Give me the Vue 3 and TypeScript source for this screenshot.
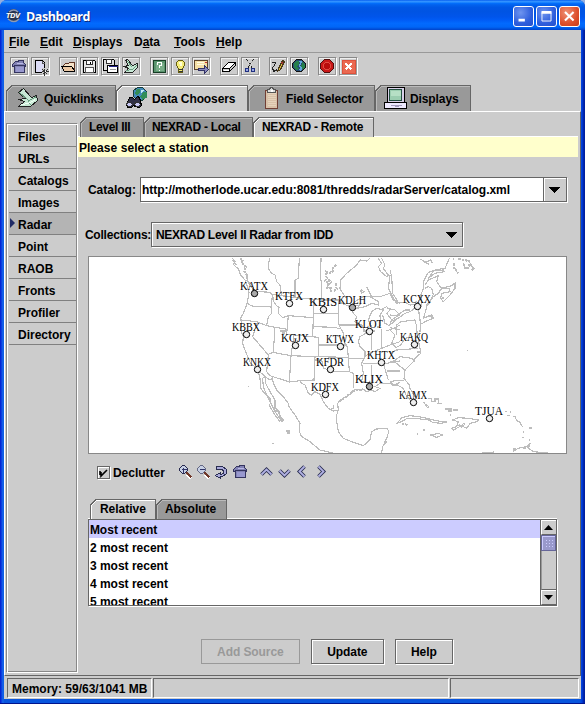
<script setup lang="ts">
interface Shape { d: string; f?: string; s?: string; w?: number }
interface Tab { label: string; width: number; pad: number; active?: boolean; icon?: string; cls?: string }
interface Station { id: string; x: number; y: number; tx: number; ty: number; on?: boolean }

const K = '#000'
const icons: Record<string, Shape[]> = {
  home: [
    { d: 'M2 7L5 4H8V3H13V5L15 7V9H14V15H4V9H2Z', f: '#8383b5', s: '#34345f' },
    { d: 'M5 9H13V14H5Z', f: '#9999cf' }, { d: 'M3 8H15', s: '#34345f' }, { d: 'M6 6H12', s: '#b9b9e6' }
  ],
  page: [
    { d: 'M4 3H11L13 5V15H4Z', f: '#dcdcf6', s: K }, { d: 'M11 3V6H13', s: '#555' }, { d: 'M10 10H17V17H10Z', f: '#ccc' },
    { d: 'M10 14H17M13 11V18M11 12L16 17M16 12L11 17', s: '#333' }, { d: 'M13 14h1', s: '#fff', w: 1 }
  ],
  open: [
    { d: 'M4 8L6 6H9L10 5H15V13H5Z', f: '#f6e3c9', s: '#5d3322' }, { d: 'M2 9H12L15 13V14H5Z', f: '#ecc9a5', s: K }
  ],
  save: [
    { d: 'M3 3H14L15 4V15H3Z', f: '#e8e8e8', s: K }, { d: 'M6 3H12V7H6Z', f: '#fff', s: '#333' }, { d: 'M5 10H13V15H5Z', f: '#fff', s: '#555' }, { d: 'M10 4V6', s: K }
  ],
  saveas: [
    { d: 'M2 2H12L13 3V13H2Z', f: '#ddd', s: K }, { d: 'M5 2H10V6H5Z', f: '#fff', s: '#333' },
    { d: 'M6 8H16V15H6Z', f: '#fff', s: K }, { d: 'M7 9H16', s: '#228' }, { d: 'M8 12H14', s: '#999' }
  ],
  link: [
    { d: 'M3 3L5 2L10 8L15 6V10L10 15H2L6 11L2 9L6 8Z', f: '#c7e9d5', s: '#222' }, { d: 'M4 13L10 12L14 8M5 4L10 10', s: '#6b9d80' }
  ],
  help: [
    { d: 'M3 3H15V15H3Z', f: '#5a946e', s: '#173d25' }, { d: 'M5 5H13V13H5Z', f: '#78ad88' },
    { d: 'M7 7V5H11V8H9V10M9 12V13', s: '#fff' }
  ],
  bulb: [
    { d: 'M7 3H11L13 5V8L11 11V15H7V11L5 8V5Z', f: '#f5ed79', s: '#665e12' }, { d: 'M7 5L8 4H10L11 7L9 9Z', f: '#ffffd8' }, { d: 'M7 12H11M7 14H11', s: '#333' }
  ],
  send: [
    { d: 'M2 3H15V12H2Z', f: '#f4dfa5', s: '#5b432b' }, { d: 'M4 5H11M4 7H11', s: '#fffbe3' }, { d: 'M6 11H12V8L16 12L12 16V13H6Z', f: '#8888bb', s: '#333366' }, { d: 'M12 5H14', s: '#c33' }
  ],
  eraser: [{ d: 'M2 11L8 5H15L9 11Z', f: '#fff', s: K }, { d: 'M2 11V14H9L15 8V5L9 11V14', s: K }, { d: 'M3 12H8V13H3Z', f: '#fff' }],
  cut: [
    { d: 'M5 2L11 11M12 2L6 11', s: '#222' }, { d: 'M6 3L10 9M11 3L8 8', s: '#eee', w: .7 }, { d: 'M4 11H7V14H4ZM10 11H13V14H10Z', f: '#9ca8e2', s: '#203081' }
  ],
  pencil: [
    { d: 'M2 5H6L5 8L3 10L4 14L8 12', s: '#222' }, { d: 'M8 14L9 11L13 3L15 4L11 12Z', f: '#d9b83d', s: '#49391a' }, { d: 'M12 5L14 6', s: '#a33' }
  ],
  globe: [
    { d: 'M6 2H11L15 6V10L11 14H6L2 10V6Z', f: '#244c74', s: '#111' },
    { d: 'M6 3H9L8 7L6 9L8 11L6 13L3 10V6ZM11 4L14 7V10L12 12L10 10L11 7Z', f: '#26804c' }, { d: 'M8 4H11L9 8L11 11L9 13', s: '#62a6dc', w: 1.5 }
  ],
  stop: [{ d: 'M6 2H11L15 6V11L11 15H6L2 11V6Z', f: '#c91818', s: '#510d0d' }, { d: 'M7 5H10L12 7V10L10 12H7L5 10V7Z', f: '#b90c0c', s: '#e04a40' }],
  close: [{ d: 'M2 2H16V16H2Z', f: '#df513b' }, { d: 'M3 3H15V15H3Z', f: '#ea6951' }, { d: 'M6 6L12 12M12 6L6 12', s: '#fff', w: 2.5 }],
  zoomin: [{ d: 'M9 10L13 14', s: '#fff', w: 4 }, { d: 'M8 8L13 13', s: '#70382a', w: 2 }, { d: 'M4 1H6L9 4V6L6 9H4L1 6V4Z', f: '#c7d0e4', s: '#272a50' }, { d: 'M3 5H8M5 3V8', s: '#313569' }],
  zoomout: [{ d: 'M9 10L13 14', s: '#fff', w: 4 }, { d: 'M8 8L13 13', s: '#70382a', w: 2 }, { d: 'M4 1H6L9 4V6L6 9H4L1 6V4Z', f: '#c7d0e4', s: '#656985' }, { d: 'M3 5H8', s: '#313569' }],
  undo: [{ d: 'M2 2H8L12 5V9L8 12H6V14L1 11L6 8V10L9 9V6L7 5L2 5Z', f: '#aaaada', s: '#292d51' }],
  up: [{ d: 'M1 9L6 4L11 9', s: '#292d51', w: 3.6 }, { d: 'M1 9L6 4L11 9', s: '#b1b1e3', w: 1.8 }],
  down: [{ d: 'M1 5L6 10L11 5', s: '#292d51', w: 3.6 }, { d: 'M1 5L6 10L11 5', s: '#b1b1e3', w: 1.8 }],
  left: [{ d: 'M8 1L3 6L8 11', s: '#292d51', w: 3.6 }, { d: 'M8 1L3 6L8 11', s: '#b1b1e3', w: 1.8 }],
  right: [{ d: 'M4 1L9 6L4 11', s: '#292d51', w: 3.6 }, { d: 'M4 1L9 6L4 11', s: '#b1b1e3', w: 1.8 }],
  ribbon: [
    { d: 'M1 6L6 2L14 11L19 9L20 14L13 20H1L7 15L1 13L8 12Z', f: '#c7e9d5', s: '#222' }, { d: 'M2 6L11 14M12 14L19 10M11 14L13 19', s: '#699d7f' }, { d: 'M4 18L11 17L18 13', s: '#f0fff5' }
  ],
  binoculars: [
    { d: 'M12 1H17L21 5V10L17 14H12L8 10V4Z', f: '#438bbb', s: '#173d3c' }, { d: 'M11 3L15 2L14 6L11 9L9 7ZM18 5L21 6V11L17 13L15 10Z', f: '#328d58' }, { d: 'M15 3L18 4L16 6Z', f: '#c5ecf5' },
    { d: 'M4 11H7L9 13L12 10L14 11L16 19L14 21L10 20L8 19L6 21H2L1 18Z', f: '#303047', s: K }, { d: 'M2 16H5L7 18L5 20H3L1 18ZM10 16H13L15 18L13 20H11L9 18Z', f: '#c6c6f5', s: '#333' }
  ],
  clipboard: [
    { d: 'M2 4H14V22H2Z', f: '#d9c1a8', s: '#713f35' }, { d: 'M4 7H12M4 9H12M4 11H12M4 13H12M4 15H12M4 17H12M4 19H12', s: '#e6d3bc' }, { d: 'M4 3H6L7 1H9L10 3H12V6H4Z', f: '#ddd', s: '#555' }, { d: 'M7 3H9V5H7Z', f: '#fff' }
  ],
  computer: [
    { d: 'M4 1H21V16H4Z', f: '#d8d0e8', s: K }, { d: 'M6 3H18V14H6Z', f: '#9bcdb0', s: '#245041' }, { d: 'M7 4H17V9H7Z', f: '#b6dfc5' },
    { d: 'M1 16H23V22H1Z', f: '#eeeaff', s: K }, { d: 'M7 19H18M11 20H15', s: '#a49cbd' }
  ]
}

const menus = [
  { a: '', u: 'F', b: 'ile', w: 31 }, { a: '', u: 'E', b: 'dit', w: 33 }, { a: '', u: 'D', b: 'isplays', w: 61 },
  { a: 'D', u: 'a', b: 'ta', w: 40 }, { a: '', u: 'T', b: 'ools', w: 42 }, { a: '', u: 'H', b: 'elp', w: 30 }
]
const tools = [['home', 'page'], ['open', 'save', 'saveas', 'link'], ['help', 'bulb', 'send'], ['eraser', 'cut'], ['pencil', 'globe'], ['stop', 'close']]
const mainTabs: Tab[] = [
  { label: 'Quicklinks', width: 110, pad: 11, icon: 'ribbon' },
  { label: 'Data Choosers', width: 132, pad: 9, active: true, icon: 'binoculars', cls: 'w25' },
  { label: 'Field Selector', width: 127, pad: 15, icon: 'clipboard', cls: 'w16' },
  { label: 'Displays', width: 96, pad: 8, icon: 'computer', cls: 'w25' }
]
const radarTabs: Tab[] = [
  { label: 'Level III', width: 64, pad: 9 }, { label: 'NEXRAD - Local', width: 109, pad: 8 }, { label: 'NEXRAD - Remote', width: 121, pad: 9, active: true }
]
const timeTabs: Tab[] = [{ label: 'Relative', width: 66, pad: 10, active: true }, { label: 'Absolute', width: 71, pad: 9 }]
const nav = ['Files', 'URLs', 'Catalogs', 'Images', 'Radar', 'Point', 'RAOB', 'Fronts', 'Profiler', 'Directory']
const times = ['Most recent', '2 most recent', '3 most recent', '4 most recent', '5 most recent']

const stations: Station[] = [
  { id: 'KATX', x: 254, y: 293, tx: 240, ty: 290, on: true }, { id: 'KTFX', x: 289, y: 303, tx: 275, ty: 300 },
  { id: 'KBIS', x: 323, y: 309, tx: 309, ty: 306 }, { id: 'KDLH', x: 352, y: 307, tx: 338, ty: 304, on: true },
  { id: 'KCXX', x: 417, y: 306, tx: 403, ty: 303 }, { id: 'KBBX', x: 246, y: 334, tx: 232, ty: 331 },
  { id: 'KGJX', x: 295, y: 345, tx: 281, ty: 342 }, { id: 'KTWX', x: 340, y: 346, tx: 326, ty: 343 },
  { id: 'KLOT', x: 369, y: 331, tx: 355, ty: 328 }, { id: 'KAKQ', x: 414, y: 344, tx: 400, ty: 341 },
  { id: 'KNKX', x: 257, y: 369, tx: 243, ty: 366 }, { id: 'KFDR', x: 330, y: 369, tx: 316, ty: 366 },
  { id: 'KHTX', x: 381, y: 362, tx: 367, ty: 359 }, { id: 'KLIX', x: 369, y: 386, tx: 355, ty: 383, on: true },
  { id: 'KDFX', x: 325, y: 394, tx: 311, ty: 391 }, { id: 'KAMX', x: 413, y: 402, tx: 399, ty: 399 },
  { id: 'TJUA', x: 489, y: 418, tx: 475, ty: 415 }
]

const west = [
  'M38 10L45 20 40 28 55 42 62 60 75 75 82 95 87 112 84 130 80 150 70 175 62 190 65 205 62 225 70 245 68 265 75 285 85 310 92 325 110 340 115 350 130 358 135 365 128 370 130 395 138 415 148 435 165 470 185 500 190 495 180 485 178 470 165 455 165 435 150 410 137 385 135 365 150 375 157 370 160 385 170 405 190 425 205 445 207 455 225 480 240 505 238 530 245 545 270 560 300 585 340 594',
  'M115 350L120 370 122 400 130 410 150 430 152 445 147 450 165 480 180 500',
  'M95 108L150 112 155 118 185 122 225 128 305 135 355 135 365 145 378 150 392 155',
  'M148 10L145 40 155 55 165 60 170 80 180 90 185 122', 'M238 10L235 70 225 75 225 128', 'M303 10L302 70 305 90 305 135',
  'M84 145L92 152 110 155 152 155', 'M158 118L153 155 155 175 145 185 140 212', 'M62 195L110 200 140 212 165 217 198 222',
  'M158 118L160 138 168 150 177 158 175 175 188 188 205 182 280 188', 'M283 130L280 188 278 245', 'M205 182L200 238 295 247 295 305', 'M165 217L160 292 145 298 140 350',
  'M110 205L98 245 145 300', 'M158 292L213 302 285 305 385 307', 'M222 240L213 302 208 381 150 362 140 350', 'M285 305L282 375 240 377',
  'M208 381L240 377 245 385 255 390 265 415 275 420 285 410 300 418 310 440 325 460 340 468 355 465', 'M280 175L355 175', 'M280 215L345 217 360 222',
  'M355 135V175L357 210 370 235 375 265 382 275 385 307 388 350 400 355 400 380 402 400', 'M357 210H412L430 218', 'M295 270H378', 'M285 315H305L310 340 330 345 345 350 388 350',
  'M355 465L353 445 360 435 380 425 395 415 402 405 430 403 440 410 455 405 465 410 480 400 465 395 480 385 510 385 520 392 540 382',
  'M390 152L400 175 410 185 405 200 425 210 438 235 420 245 415 260 420 275 435 290 435 305 425 325 430 355 425 380 460 385', 'M385 310H430',
  'M430 228H465M455 228V285M485 222V280L460 290 435 303M510 218L540 225M485 280L510 270 540 260', 'M430 325H500L540 318M455 330L455 385M490 325L505 375M500 348H540',
  'M390 155L405 140 430 125 450 125 475 140 475 150 455 145 435 155 410 160 420 150Z', 'M455 215L445 195 455 170 470 160 490 165 480 180 482 210 470 218',
  'M480 165L500 155 510 165 500 175 515 195 508 212 495 205 488 180', 'M500 228L520 220 540 210M515 195L530 185 540 180M500 160L525 165 540 180',
  'M450 10L440 18 420 15 410 30 380 55 362 75 360 100 368 115 380 130', 'M440 95L455 125 480 125 510 115 520 135 540 145M425 105L432 110 425 115 422 108Z',
  'M475 10L485 25 475 35 482 50 500 65 505 60 490 40 495 30 485 10M510 60L505 100 520 130 530 145 540 142',
  'M355 465L350 480 350 500 355 530 370 550 395 560 430 572 450 555 455 530 470 522 500 520 507 528 500 550 488 575 485 594',
  'M83 395h4M157 565h4', 'M340 450v10h-6M490 570L500 560'
]
const rough = ['M60 10L68 15 65 25 78 35 72 48 82 62 80 75 92 90 108 112', 'M40 15L48 30', 'M348 30L338 40 340 48 328 55 318 50 320 70 315 78 325 82 322 98 332 100 334 112M325 72L333 80 330 90M348 85L350 102 342 108', 'M180 228h14v6h-10M200 528h6v6h-6zM160 457L178 475 185 500M358 440L385 420 400 408 430 403']
const east = [
  'M0 45L5 65 8 115 25 142 45 142 60 150 80 148', 'M92 12L105 22 122 15 128 25M105 22L118 28', 'M178 10L165 40 135 45 115 52 100 80 100 100 85 140 80 155 60 170 45 175 25 190 0 200',
  'M115 70L130 48 160 45 162 50 135 55 115 70M105 90L115 75 145 62 140 80 150 95 155 100 185 92 195 85 195 100 180 120 160 140 152 130 155 115 180 110 178 100 155 100 145 115 130 125 120 140 110 150 108 165 100 190 125 180 130 190 105 200 92 208 90 230',
  'M105 100L115 95 125 100 130 118 118 145 108 155M0 180L20 182 45 165 60 165M95 120V155L85 160 92 208', 'M0 210L20 192 32 185M20 240V210L32 200 75 195 80 215 82 245 90 260',
  'M0 225L15 240 5 265 18 278 32 270 45 250 70 245', 'M90 235L85 255 90 280 92 295 75 310 70 320 45 345 42 370 58 390 60 400 78 430 72 450 60 435 48 420 40 400 22 390 10 390 0 380',
  'M0 295L20 285 85 280M0 320L12 318 30 305 65 310 75 320M45 345L25 330 12 318M0 380L20 376 42 376',
  'M22 505L35 488 60 482 85 485 110 490 130 495 155 500 172 500 155 505 130 503 115 495 75 490 52 490 35 500Z',
  'M185 520L200 515 205 500 188 495 205 488 235 490 265 495 262 500 240 505 230 520 215 512 190 525Z', 'M122 540L145 535 158 540 140 547ZM100 525h4M80 537h4',
  'M115 430h10v10h10v-8h10v14M140 445h15M165 462h18v6h-8M100 440L110 455M188 465h15v-3M180 480h4',
  'M275 592h30M305 592h5v-5M368 590L385 580 410 575 420 565 415 580 430 590 475 594M345 470h5M350 482h10M370 485h5l5 12 10 5 8 15M400 528v6M397 548h4M418 518h7v3h-7M418 555h3', 'M231 286h4'
]
const eastRough = ['M188 12h5M192 25L192 38 205 55M205 12L225 15 235 20M220 25L225 40 235 38 240 25 250 40 245 45M225 15L240 20', 'M188 85L197 92M155 130h6M115 180L128 188M82 290h8M100 440l15 18M35 505l18 5M205 510L215 515 225 505M400 580l15-5M370 582h8M360 470h4']
</script>

<template>
  <div class="window">
    <header class="title">
      <svg class="logo" width="16" height="16" viewBox="0 0 16 16"><circle cx="7.500" cy="7.500" r="6.500" fill="#26344e" /><path d="M3 4Q8 0 12 4M2 11Q8 16 13 11" stroke="#8e9ab4" stroke-width="1.500" fill="none" /><text x="0" y="10">TDV</text></svg>
      <span class="title-text">Dashboard</span>
      <div class="win-buttons">
        <svg class="wb" viewBox="0 0 21 21"><path d="M5 14.500H12" stroke-width="3" /></svg>
        <svg class="wb" viewBox="0 0 21 21"><path d="M5 6H16" stroke-width="3" /><path d="M5.500 6V15.500H15.500V6" /></svg>
        <svg class="wb red" viewBox="0 0 21 21"><path d="M5.500 5.500L15 15M15 5.500L5.500 15" stroke-width="2.300" /></svg>
      </div>
    </header>
    <div class="body">
      <nav class="menu"><span v-for="m in menus" :key="m.u + m.b" :style="{ width: m.w + 'px' }">{{ m.a }}<u>{{ m.u }}</u>{{ m.b }}</span></nav>
      <div class="toolbar">
        <div v-for="(g, i) in tools" :key="i" class="group">
          <button v-for="t in g" :key="t" class="tool"><svg width="18" height="18" viewBox="-.5 .5 18 18" shape-rendering="crispEdges"><path v-for="(p, j) in icons[t]" :key="j" :d="p.d" :fill="p.f || 'none'" :stroke="p.s" :stroke-width="p.w || 1" /></svg></button>
        </div>
      </div>
      <div class="tabs main-tabs">
        <div v-for="t in mainTabs" :key="t.label" class="tab" :style="{ width: t.width + 'px', paddingLeft: t.pad + 'px' }">
          <svg class="tab-bg" :width="t.width" height="26" shape-rendering="crispEdges"><path :d="`M.5 26V6L6 .5H${t.width - .5}V26`" :fill="t.active ? '#ccc' : '#999'" stroke="#666" /><path :d="`M1.500 26V6.500L6.500 1.500H${t.width - 1}`" fill="none" :stroke="t.active ? '#fff' : '#bbb'" /></svg>
          <svg class="tab-icon" :class="t.cls" height="24" :viewBox="`-.5 -.5 ${t.cls === 'w16' ? 16 : t.cls === 'w25' ? 25 : 22} 24`" shape-rendering="crispEdges"><path v-for="(p, j) in icons[t.icon!]" :key="j" :d="p.d" :fill="p.f || 'none'" :stroke="p.s" :stroke-width="p.w || 1" /></svg>
          <span>{{ t.label }}</span>
        </div>
      </div>
      <main class="content">
        <aside class="side"><div v-for="n in nav" :key="n" class="side-item" :class="{ sel: n === 'Radar' }"><i v-if="n === 'Radar'"></i>{{ n }}</div></aside>
        <section class="pane">
          <div class="tabs radar-tabs">
            <div v-for="t in radarTabs" :key="t.label" class="tab small" :style="{ width: t.width + 'px', paddingLeft: t.pad + 'px' }">
              <svg class="tab-bg" :width="t.width" height="20" shape-rendering="crispEdges"><path :d="`M.5 20V6L6 .5H${t.width - .5}V20`" :fill="t.active ? '#ccc' : '#999'" stroke="#666" /><path :d="`M1.500 20V6.500L6.500 1.500H${t.width - 1}`" fill="none" :stroke="t.active ? '#fff' : '#bbb'" /></svg>
              <span>{{ t.label }}</span>
            </div>
          </div>
          <div class="message">Please select a station</div>
          <div class="field catalog"><label>Catalog:</label><div class="combo editable"><span>http://motherlode.ucar.edu:8081/thredds/radarServer/catalog.xml</span><b><svg width="11" height="6"><path d="M0 0H11L5.500 6Z" /></svg></b></div></div>
          <div class="field collection"><label>Collections:</label><div class="combo choice"><span>NEXRAD Level II Radar from IDD</span><svg width="11" height="6"><path d="M0 0H11L5.500 6Z" /></svg></div></div>
          <svg class="map" width="477" height="196" viewBox="89 257 477 196">
            <g class="coast" transform="translate(220 255) scale(.33333)"><path v-for="d in west" :key="d" :d="d" /><path v-for="d in rough" :key="d" :d="d" class="rough" /></g>
            <g class="coast" transform="translate(390 255) scale(.33333)"><path v-for="d in east" :key="d" :d="d" /><path v-for="d in eastRough" :key="d" :d="d" class="rough" /></g>
            <g v-for="s in stations" :key="s.id"><circle :cx="s.x + .5" :cy="s.y + .5" r="3.200" :fill="s.on ? '#aaa' : '#eee'" stroke="#000" /><text :x="s.tx" :y="s.ty" textLength="28" lengthAdjust="spacingAndGlyphs">{{ s.id }}</text></g>
          </svg>
          <div class="map-tools">
            <span class="check"><svg width="11" height="11"><path d="M2 4V8M3 5V9L9 3" fill="none" stroke="#000" stroke-width="1.600" /></svg></span><span class="declutter">Declutter</span>
            <div class="mini"><svg v-for="i in ['zoomin', 'zoomout', 'undo', 'home']" :key="i" width="16" height="16" :viewBox="i === 'home' ? '.5 1.500 16 16' : '-.5 -.5 16 16'" shape-rendering="crispEdges"><path v-for="(p, j) in icons[i]" :key="j" :d="p.d" :fill="p.f || 'none'" :stroke="p.s" :stroke-width="p.w || 1" /></svg></div>
            <div class="mini arrows"><svg v-for="i in ['up', 'down', 'left', 'right']" :key="i" width="16" height="16" viewBox="-.5 -1.500 16 16"><path v-for="(p, j) in icons[i]" :key="j" :d="p.d" fill="none" :stroke="p.s" :stroke-width="p.w || 1" /></svg></div>
          </div>
          <div class="tabs time-tabs">
            <div v-for="t in timeTabs" :key="t.label" class="tab small" :style="{ width: t.width + 'px', paddingLeft: t.pad + 'px' }">
              <svg class="tab-bg" :width="t.width" height="20" shape-rendering="crispEdges"><path :d="`M.5 20V6L6 .5H${t.width - .5}V20`" :fill="t.active ? '#ccc' : '#999'" stroke="#666" /><path :d="`M1.500 20V6.500L6.500 1.500H${t.width - 1}`" fill="none" :stroke="t.active ? '#fff' : '#bbb'" /></svg>
              <span>{{ t.label }}</span>
            </div>
          </div>
          <div class="list">
            <div class="rows"><div v-for="(t, i) in times" :key="t" class="row" :class="{ picked: i === 0 }">{{ t }}</div></div>
            <div class="scroll"><div class="sb"><svg width="9" height="5"><path d="M0 5H9L4.500 0Z" /></svg></div><div class="thumb"></div><div class="track"></div><div class="sb"><svg width="9" height="5"><path d="M0 0H9L4.500 5Z" /></svg></div></div>
          </div>
          <div class="actions"><button class="disabled">Add Source</button><button class="update">Update</button><button class="helpb">Help</button></div>
        </section>
      </main>
      <footer class="status"><div class="c1">Memory: 59/63/1041 MB</div><div class="c2"></div><div class="c3"></div></footer>
    </div>
  </div>
</template>

<style>
body { background: #93aee0; overflow: hidden; }
</style>
<style scoped>
* { box-sizing: border-box; }
svg { display: block; flex: none; }
.window { width: 585px; height: 704px; padding: 0 4px 4px; background: linear-gradient(90deg, #0019cf, #0831d9 1px, #166aee 3px, #0855dd 4px, #0855dd 580px, #003ddc 582px, #001f9e 584px); border-bottom: 1px solid #00138c; border-radius: 7px 7px 0 0; font: bold 12px/14px "Liberation Sans", Arial, sans-serif; color: #000; white-space: nowrap; display: flex; flex-direction: column; }
.title { height: 30px; margin: 0 -4px; padding: 1px 6px 0; display: flex; align-items: center; flex: none; border-radius: 7px 7px 0 0; background: linear-gradient(#0058ee 0, #3593ff 4%, #288eff 7%, #036ffc 11%, #0262ee 16%, #0057e5 25%, #0054e3 38%, #0055eb 56%, #005bf5 66%, #026afe 78%, #0066f7 90%, #0042c9 100%); }
.logo text { font: italic bold 7px "Liberation Sans", sans-serif; fill: #fff; stroke: #fff; stroke-width: .2px; }
.title-text { color: #fff; font: bold 12.5px/20px "Open Sans", "Noto Sans", sans-serif; letter-spacing: -.45px; margin-left: 4px; padding-top: 3px; text-shadow: 1px 1px #0b2a7d; flex: 1; }
.win-buttons { display: flex; gap: 2px; padding-top: 2px; margin-right: -1px; }
.wb { width: 21px; height: 21px; border: 1px solid #fff; border-radius: 3px; background: radial-gradient(circle at 35% 30%, #6e94ef, #2e5edc 60%, #2350cd); stroke: #fff; stroke-width: 1; fill: none; }
.wb.red { background: radial-gradient(circle at 35% 30%, #ef9276, #dd4f2c 60%, #c83b16); }
.body { flex: 1; width: 577px; background: #ccc; display: flex; flex-direction: column; min-height: 0; }
.menu { height: 23px; padding: 5px 0 0 5px; display: flex; border-bottom: 1px solid #999; flex: none; }
u { text-underline-offset: 1px; text-decoration-thickness: 1px; }
.menu span { display: block; }
.toolbar { height: 32px; padding: 4px 6px 0; display: flex; gap: 9px; flex: none; }
.group { display: flex; gap: 2px; }
.tool { width: 19px; height: 19px; padding: 0; border: 1px solid #888; border-right-color: #fff; border-bottom-color: #fff; background: #ccc; box-shadow: inset -1px -1px #999, inset 1px 1px #eee; }
.tool svg { margin: -1px; }
.tabs { display: flex; flex: none; }
.tab { height: 26px; display: flex; align-items: center; position: relative; }
.tab-bg { position: absolute; left: 0; top: 0; }
.tab-icon { position: relative; width: 22px; margin-right: 5px; }
.tab-icon.w25 { width: 25px; margin-right: 2px; }
.tab-icon.w16 { width: 16px; margin-right: 7px; }
.tab span { position: relative; }
.main-tabs { padding-left: 2px; height: 26px; }
.main-tabs .tab span { padding-top: 1px; letter-spacing: -.1px; }
.radar-tabs .tab span { letter-spacing: -.28px; }
.content { height: 565px; border-left: 1px solid #fff; border-top: 1px solid #fff; border-right: 1px solid #666; border-bottom: 1px solid #666; padding: 11px 2px 0 1px; display: flex; flex: none; }
.side { width: 72px; height: 550px; border: 1px solid #888; border-right-color: #fff; border-bottom-color: #fff; box-shadow: inset 1px 1px #fff, inset -1px 0 #888, inset 0 -1px #888; padding: 1px 1px 1px 2px; }
.side-item { height: 22px; padding: 5px 0 0 9px; border-bottom: 1px solid #808080; position: relative; }
.side-item.sel { background: #b4b4b4; }
.side-item i { position: absolute; left: 1px; top: 5px; border: 5px solid transparent; border-left-color: #202b66; border-right: 0; }
.pane { width: 501px; margin-top: -6px; }
.radar-tabs { padding-left: 2px; height: 19px; }
.tab.small { height: 20px; }
.message { height: 21px; background: #ffc; border-top: 1px solid #fff; padding: 4px 0 0 1px; letter-spacing: .07px; }
.field { display: flex; align-items: center; }
.field svg { shape-rendering: crispEdges; }
.catalog { margin: 20px 0 0 10px; height: 25px; }
.catalog label { width: 52px; }
.combo { display: flex; align-items: center; height: 25px; border: 1px solid #666; box-shadow: 1px 1px #fff; }
.editable { width: 427px; background: #fff; padding-left: 1px; }
.editable span { flex: 1; letter-spacing: -.02px; }
.editable b { width: 23px; height: 23px; display: flex; align-items: center; justify-content: center; background: #ccc; border-left: 1px solid #666; box-shadow: inset 1px 1px #fff; }
.collection { margin: 20px 0 0 7px; height: 25px; }
.collection label { width: 66px; letter-spacing: -.2px; }
.choice { width: 312px; box-shadow: inset 1px 1px #fff, 1px 1px #fff; justify-content: space-between; padding: 0 5px 0 4px; }
.choice span { letter-spacing: -.29px; }
.map { width: 479px; height: 198px; margin: 9px 0 0 10px; background: #fff; border: 1px solid #888; }
.coast path { fill: none; stroke: #bdbdbd; stroke-width: 3.500; shape-rendering: crispEdges; }
.coast path.rough { stroke-width: 6; stroke-dasharray: 8 2; }
.map text { font: 12px "Liberation Serif", "Times New Roman", serif; fill: #000; }
.map-tools { height: 45px; padding: 9px 0 0 19px; display: flex; align-items: flex-start; }
.check { width: 13px; height: 13px; margin-top: 3px; border: 1px solid #666; box-shadow: inset 1px 1px #fff, 1px 1px #fff; }
.declutter { margin: 3px 0 0 3px; width: 65px; }
.mini { display: flex; gap: 2px; padding-top: 1px; }
.arrows { margin-left: 12px; }
.time-tabs { padding-left: 12px; height: 20px; }
.list { width: 469px; height: 87px; margin-left: 10px; border: 1px solid #666; box-shadow: 0 -1px #fff, 1px 1px #fff; display: flex; background: #fff; overflow: hidden; }
.rows { flex: 1; overflow: hidden; }
.row { height: 18px; padding: 3px 0 0 1px; }
.picked { background: #ccf; }
.scroll { width: 16px; display: flex; flex-direction: column; border-left: 1px solid #666; background: #ccc; }
.sb { height: 15px; flex: none; display: flex; align-items: center; justify-content: center; border-top: 1px solid #fff; border-left: 1px solid #fff; border-bottom: 1px solid #666; }
.thumb { height: 16px; flex: none; border: 1px solid #669; background: radial-gradient(circle, #ccf 0 .6px, transparent .9px) 3px 3px / 3px 3px #99c; box-shadow: inset 1px 1px #ccf, inset 0 0 0 2px #99c; }
.track { flex: 1; border-left: 1px solid #999; border-bottom: 1px solid #666; }
.actions { display: flex; padding: 33px 0 0 123px; gap: 11px; }
.actions button { height: 25px; padding: 0; font: inherit; letter-spacing: -.08px; background: #ccc; border: 1px solid #666; box-shadow: inset 1px 1px #fff, 1px 1px #fff; color: #000; }
.actions .disabled { width: 99px; color: #999; border-color: #999; box-shadow: none; }
.update { width: 73px; }
.helpb { width: 58px; }
.status { display: flex; gap: 1px; padding: 2px 2px 0 3px; }
.status div { height: 20px; border: 1px solid #666; border-right-color: #fff; border-bottom-color: #fff; }
.c1 { width: 145px; padding: 3px 0 0 4px; }
.c2 { width: 296px; }
.c3 { width: 129px; }
</style>
